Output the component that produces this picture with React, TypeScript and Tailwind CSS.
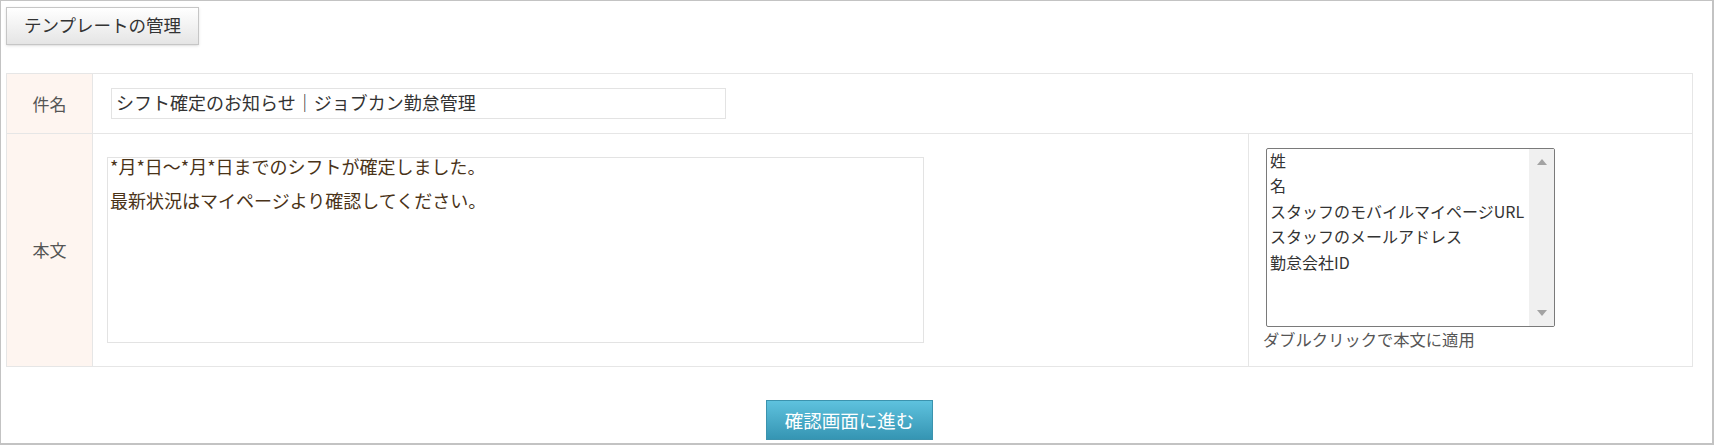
import { useState } from 'react';

const font = { fontFamily: '"Noto Sans CJK JP", "Noto Sans", sans-serif' };

export default function App() {
    const [body, setBody] = useState('*月*日〜*月*日までのシフトが確定しました。\n\n最新状況はマイページより確認してください。');
    const [subject, setSubject] = useState('シフト確定のお知らせ｜ジョブカン勤怠管理');

    const fields = ['姓', '名', 'スタッフのモバイルマイページURL', 'スタッフのメールアドレス', '勤怠会社ID'];

    return (
        <div style={font} className="w-[1714px] h-[445px] bg-white border-l border-t border-r-2 border-b-2 border-[#c3c3c3] pl-[5px] pt-[6px] text-[#333]">
            {/* テンプレート管理ボタン */}
            <button className="h-[38px] w-[193px] border border-[#c6c6c6] bg-gradient-to-b from-white to-[#e5e5e5] shadow-sm pb-[3px] text-[17.5px] text-[#333] leading-none">
                テンプレートの管理
            </button>

            <table className="mt-[28px] w-[1687px] border-collapse">
                <tbody>
                    <tr className="h-[60px]">
                        <th className="w-[86px] border border-[#e6e6e6] bg-[#fef5f0] font-normal text-[17px] text-[#555]">件名</th>
                        <td colSpan={2} className="border border-[#e6e6e6] pl-[18px]">
                            <input
                                value={subject}
                                onChange={(e) => setSubject(e.target.value)}
                                style={font}
                                className="block w-[615px] h-[31px] border border-[#e3e3e3] px-[4px] pb-[3px] text-[18px] text-[#333] outline-none"
                            />
                        </td>
                    </tr>
                    <tr className="h-[233px]">
                        <th className="border border-[#e6e6e6] bg-[#fef5f0] font-normal text-[17px] text-[#555]">本文</th>
                        <td className="w-[1156px] border border-[#e6e6e6] pl-[14px]">
                            <textarea
                                value={body}
                                onChange={(e) => setBody(e.target.value)}
                                style={font}
                                className="block w-[817px] h-[186px] resize-none border border-[#e3e3e3] px-[2px] pt-0 text-[18px] leading-[17px] text-[#4a3318] outline-none"
                            />
                        </td>
                        <td className="border border-[#e6e6e6] pl-[17px] pt-[14px] align-top">
                            <div className="flex w-[289px] h-[179px] border border-[#7a7a7a] rounded-[2px] overflow-hidden">
                                <ul className="flex-1 pl-[3px] -mt-px text-[16px] leading-[25.4px] text-[#333]">
                                    {fields.map((f) => (
                                        <li key={f} className="whitespace-nowrap cursor-default">{f}</li>
                                    ))}
                                </ul>
                                <div className="w-[25px] bg-[#f0f0f0] flex flex-col items-center justify-between py-[10px]">
                                    <svg width="10" height="6" viewBox="0 0 10 6"><path d="M5 0 L10 6 L0 6 Z" fill="#a3a3a3" /></svg>
                                    <svg width="10" height="6" viewBox="0 0 10 6"><path d="M0 0 L10 0 L5 6 Z" fill="#a3a3a3" /></svg>
                                </div>
                            </div>
                            <p className="mt-[1px] -ml-[3px] text-[16.3px] leading-[22px] text-[#555]">ダブルクリックで本文に適用</p>
                        </td>
                    </tr>
                </tbody>
            </table>

            {/* 確認ボタン */}
            <div className="w-[1687px] flex justify-center mt-[33px]">
                <button className="w-[167px] h-[40px] border border-[#3b93ae] bg-gradient-to-b from-[#5ec2de] to-[#3595b3] text-white text-[18.5px] leading-none">
                    確認画面に進む
                </button>
            </div>
        </div>
    );
}
